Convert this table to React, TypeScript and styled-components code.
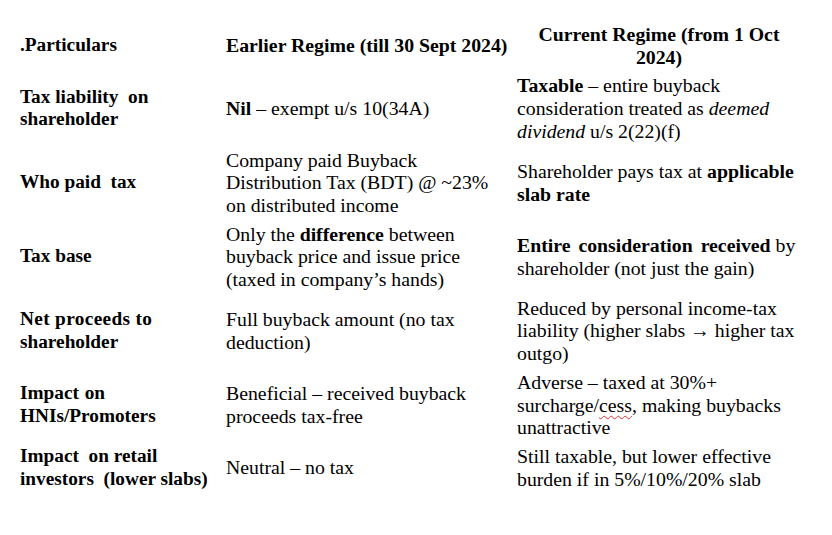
import React from "react";
import styled, { createGlobalStyle } from "styled-components";

const Global = createGlobalStyle`
  html, body { margin: 0; padding: 0; background: #ffffff; }
  body { font-family: "Liberation Serif", "Times New Roman", serif; color: #000; }
`;

const Page = styled.div`
  width: 832px;
  height: 535px;
  padding: 20px 0 0 20px;
  box-sizing: border-box;
  background: #fff;
`;

const Table = styled.div`
  display: flex;
  flex-direction: column;
`;

const Row = styled.div`
  display: grid;
  grid-template-columns: 206px 291px 284px;
  align-items: center;
  padding: 3px 0;
`;

const Cell = styled.div<{ $bold?: boolean; $center?: boolean; $size?: number }>`
  font-size: ${(p) => p.$size ?? 19.8}px;
  line-height: 22.7px;
  font-weight: ${(p) => (p.$bold ? 700 : 400)};
  text-align: ${(p) => (p.$center ? "center" : "left")};
  white-space: pre;
`;

const Line = styled.div<{ $ls?: number; $ws?: number }>`
  letter-spacing: ${(p) => (p.$ls ? `${p.$ls}px` : "normal")};
  word-spacing: ${(p) => (p.$ws ? `${p.$ws}px` : "normal")};
`;

const Spaced = styled.span<{ $ws?: number }>`
  word-spacing: ${(p) => (p.$ws ? `${p.$ws}px` : "normal")};
`;

const B = styled.b`
  font-weight: 700;
`;

const I = styled.i`
  font-style: italic;
`;

const Squiggle = styled.span`
  text-decoration: underline wavy #e03030;
  text-decoration-thickness: 1px;
  text-underline-offset: 3px;
`;

type RowData = {
  label: React.ReactNode[];
  earlier: React.ReactNode[];
  current: React.ReactNode[];
};

const rows: RowData[] = [
  {
    label: [<Line key="a">{"Tax liability  on"}</Line>, <Line key="b">shareholder</Line>],
    earlier: [<Line key="a"><B>Nil</B> – exempt u/s 10(34A)</Line>],
    current: [
      <Line key="a"><B>Taxable</B> – entire buyback</Line>,
      <Line key="b">consideration treated as <I>deemed</I></Line>,
      <Line key="c"><I>dividend</I> u/s 2(22)(f)</Line>,
    ],
  },
  {
    label: [<Line key="a">{"Who paid  tax"}</Line>],
    earlier: [
      <Line key="a">Company paid Buyback</Line>,
      <Line key="b">Distribution Tax (BDT) @ ~23%</Line>,
      <Line key="c">on distributed income</Line>,
    ],
    current: [
      <Line key="a">Shareholder pays tax at <B>applicable</B></Line>,
      <Line key="b"><B>slab rate</B></Line>,
    ],
  },
  {
    label: [<Line key="a">Tax base</Line>],
    earlier: [
      <Line key="a">Only the <B>difference</B> between</Line>,
      <Line key="b">buyback price and issue price</Line>,
      <Line key="c">(taxed in company’s hands)</Line>,
    ],
    current: [
      <Line key="a"><B><Spaced $ws={3}>Entire consideration received</Spaced></B> by</Line>,
      <Line key="b">shareholder (not just the gain)</Line>,
    ],
  },
  {
    label: [<Line key="a" $ls={0.35}>Net proceeds to</Line>, <Line key="b">shareholder</Line>],
    earlier: [<Line key="a">Full buyback amount (no tax</Line>, <Line key="b">deduction)</Line>],
    current: [
      <Line key="a">Reduced by personal income-tax</Line>,
      <Line key="b">liability (higher slabs → higher tax</Line>,
      <Line key="c">outgo)</Line>,
    ],
  },
  {
    label: [<Line key="a" $ws={1}>Impact on</Line>, <Line key="b">HNIs/Promoters</Line>],
    earlier: [<Line key="a">Beneficial – received buyback</Line>, <Line key="b">proceeds tax-free</Line>],
    current: [
      <Line key="a">Adverse – taxed at 30%+</Line>,
      <Line key="b">surcharge/<Squiggle>cess</Squiggle>, making buybacks</Line>,
      <Line key="c">unattractive</Line>,
    ],
  },
  {
    label: [<Line key="a">{"Impact  on retail"}</Line>, <Line key="b">{"investors  (lower slabs)"}</Line>],
    earlier: [<Line key="a">Neutral – no tax</Line>],
    current: [
      <Line key="a">Still taxable, but lower effective</Line>,
      <Line key="b">burden if in 5%/10%/20% slab</Line>,
    ],
  },
];

export default function App() {
  return (
    <>
      <Global />
      <Page>
        <Table>
          <Row>
            <Cell $bold $size={19.3}>.Particulars</Cell>
            <Cell $bold>Earlier Regime (till 30 Sept 2024)</Cell>
            <Cell $bold $center>
              <Line>Current Regime (from 1 Oct</Line>
              <Line>2024)</Line>
            </Cell>
          </Row>
          {rows.map((r, i) => (
            <Row key={i}>
              <Cell $bold $size={19.3}>{r.label}</Cell>
              <Cell>{r.earlier}</Cell>
              <Cell>{r.current}</Cell>
            </Row>
          ))}
        </Table>
      </Page>
    </>
  );
}
